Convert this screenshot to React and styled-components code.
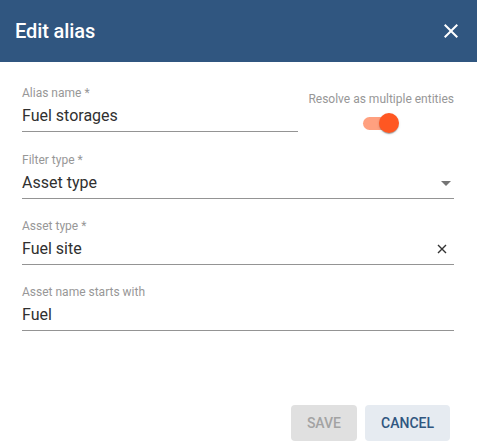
import React from "react";
import styled, { createGlobalStyle } from "styled-components";

const GlobalStyle = createGlobalStyle`
    html, body {
        margin: 0;
        padding: 0;
        background: #ffffff;
    }
    body {
        font-family: Roboto, "Noto Sans", "Liberation Sans", sans-serif;
    }
`;

const Dialog = styled.div`
    width: 477px;
    height: 448px;
    display: flex;
    flex-direction: column;
    background: #ffffff;
`;

const Header = styled.div`
    height: 62px;
    flex: none;
    display: flex;
    align-items: center;
    justify-content: space-between;
    padding: 0 8px 0 15px;
    background: #305680;
    color: #ffffff;
`;

const Title = styled.h2`
    margin: 0;
    font-size: 20px;
    font-weight: 500;
    letter-spacing: -0.1px;
    padding-bottom: 1px;
`;

const CloseButton = styled.button`
    width: 36px;
    height: 36px;
    display: flex;
    align-items: center;
    justify-content: center;
    padding: 0;
    border: 0;
    background: transparent;
    color: #ffffff;
    cursor: pointer;
`;

const Content = styled.div`
    flex: 1;
    display: flex;
    flex-direction: column;
    gap: 20px;
    padding: 24px 23px 0 22px;
`;

const Field = styled.div`
    flex: none;
    min-width: 0;
    display: flex;
    flex-direction: column;
    gap: 6px;
    padding-bottom: 5px;
    border-bottom: 1px solid #949494;
`;

const Row = styled.div`
    display: flex;
    align-items: flex-start;
    gap: 10px;

    & > ${Field} {
        flex: 1;
    }
`;

const Label = styled.label`
    font-size: 12px;
    line-height: 14px;
    color: #979797;
`;

const ValueRow = styled.div`
    display: flex;
    align-items: center;
    height: 20px;
`;

const Value = styled.span`
    flex: 1;
    font-size: 16px;
    line-height: 20px;
    color: #303030;
`;

const ArrowIcon = styled.svg`
    flex: none;
    margin-right: 3px;
    margin-top: 1px;
`;

const ClearIcon = styled.svg`
    flex: none;
    margin-right: 7px;
`;

const ToggleBlock = styled.div`
    flex: none;
    display: flex;
    flex-direction: column;
    align-items: center;
    gap: 7px;
    padding-top: 6px;
`;

const ToggleLabel = styled.span`
    font-size: 12px;
    line-height: 14px;
    color: #979797;
`;

const Switch = styled.div`
    position: relative;
    width: 36px;
    height: 20px;
    display: flex;
    align-items: center;
`;

const Track = styled.div`
    width: 34px;
    height: 13px;
    border-radius: 7px;
    background: ${p => (p.$on ? "#ffa07f" : "#bdbdbd")};
`;

const Thumb = styled.div`
    position: absolute;
    top: 0;
    left: ${p => (p.$on ? "16px" : "0")};
    width: 20px;
    height: 20px;
    border-radius: 50%;
    background: ${p => (p.$on ? "#ff5722" : "#fafafa")};
    box-shadow: 0 2px 1px -1px rgba(0, 0, 0, 0.2), 0 1px 1px 0 rgba(0, 0, 0, 0.14),
        0 1px 3px 0 rgba(0, 0, 0, 0.12);
`;

const Actions = styled.div`
    display: flex;
    justify-content: flex-end;
    gap: 8px;
    padding: 0 27px 7px 0;
`;

const Button = styled.button`
    min-width: 64px;
    height: 36px;
    padding: 0 16px;
    border: 0;
    border-radius: 4px;
    font-family: inherit;
    font-size: 14px;
    font-weight: 500;
    text-transform: uppercase;
    background: ${p => (p.disabled ? "#e0e0e0" : "#e6ebf1")};
    color: ${p => (p.disabled ? "#a3a3a3" : "#305680")};
    cursor: ${p => (p.disabled ? "default" : "pointer")};
`;

const fields = [
    { label: "Filter type *", value: "Asset type", icon: "arrow" },
    { label: "Asset type *", value: "Fuel site", icon: "clear" },
    { label: "Asset name starts with", value: "Fuel" }
];

function FieldIcon({ type }) {
    if (type === "arrow") {
        return (
            <ArrowIcon width="10" height="5" viewBox="0 0 10 5">
                <path d="M0 0h10L5 5z" fill="#757575" />
            </ArrowIcon>
        );
    }
    if (type === "clear") {
        return (
            <ClearIcon width="10" height="10" viewBox="0 0 10 10">
                <path d="M1 1l8 8M9 1l-8 8" stroke="#333" strokeWidth="1.4" />
            </ClearIcon>
        );
    }
    return null;
}

export default function App() {
    return (
        <>
            <GlobalStyle />
            <Dialog>
                <Header>
                    <Title>Edit alias</Title>
                    <CloseButton aria-label="Close">
                        <svg width="24" height="24" viewBox="0 0 24 24">
                            <path
                                fill="currentColor"
                                d="M19 6.41L17.59 5 12 10.59 6.41 5 5 6.41 10.59 12 5 17.59 6.41 19 12 13.41 17.59 19 19 17.59 13.41 12z"
                            />
                        </svg>
                    </CloseButton>
                </Header>
                <Content>
                    <Row>
                        <Field>
                            <Label>Alias name *</Label>
                            <ValueRow>
                                <Value>Fuel storages</Value>
                            </ValueRow>
                        </Field>
                        <ToggleBlock>
                            <ToggleLabel>Resolve as multiple entities</ToggleLabel>
                            <Switch>
                                <Track $on />
                                <Thumb $on />
                            </Switch>
                        </ToggleBlock>
                    </Row>
                    {fields.map(f => (
                        <Field key={f.label}>
                            <Label>{f.label}</Label>
                            <ValueRow>
                                <Value>{f.value}</Value>
                                <FieldIcon type={f.icon} />
                            </ValueRow>
                        </Field>
                    ))}
                </Content>
                <Actions>
                    <Button disabled>Save</Button>
                    <Button>Cancel</Button>
                </Actions>
            </Dialog>
        </>
    );
}
